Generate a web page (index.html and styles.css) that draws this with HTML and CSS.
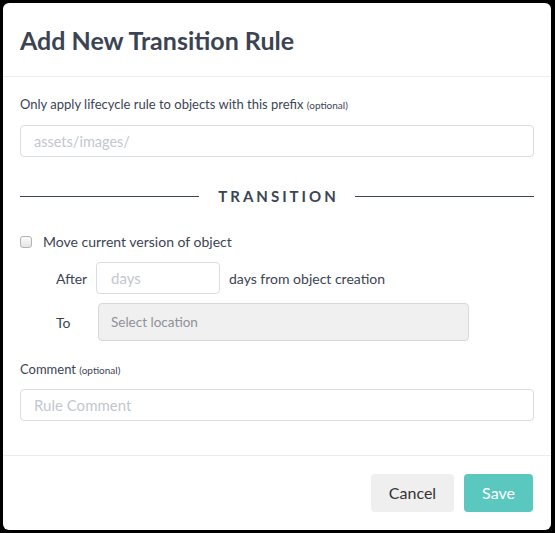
FILE: index.html
```html
<!DOCTYPE html>
<html>
<head>
<meta charset="utf-8">
<link rel="stylesheet" href="styles.css">
</head>
<body>
<div class="modal">
  <div class="modal-header">
    <h1 class="title">Add New Transition Rule</h1>
  </div>
  <div class="modal-body">
    <div class="label">Only apply lifecycle rule to objects with this prefix <small>(optional)</small></div>
    <div class="input input-full"><span class="ph">assets/images/</span></div>
    <div class="divider"><span class="line"></span><span class="divider-text">TRANSITION</span><span class="line"></span></div>
    <label class="check-row"><span class="checkbox"></span><span>Move current version of object</span></label>
    <div class="sub-row after-row">
      <span class="sub-label">After</span>
      <div class="input input-days"><span class="ph">days</span></div>
      <span class="suffix">days from object creation</span>
    </div>
    <div class="sub-row to-row">
      <span class="sub-label to-label">To</span>
      <div class="select"><span class="select-ph">Select location</span></div>
    </div>
    <div class="label comment-label">Comment <small>(optional)</small></div>
    <div class="input input-full comment-input"><span class="ph ph-comment">Rule Comment</span></div>
  </div>
  <div class="modal-footer">
    <button class="btn btn-cancel">Cancel</button>
    <button class="btn btn-save">Save</button>
  </div>
</div>
</body>
</html>
```
FILE: styles.css
```css
html, body {
  margin: 0;
  padding: 0;
  background: #000;
}
body {
  width: 555px;
  height: 533px;
  overflow: hidden;
  font-family: Lato, "Noto Sans", sans-serif;
  color: #3b4453;
}
.modal {
  margin: 3px 0 0 3px;
  width: 548px;
  height: 527px;
  background: #fff;
  border-radius: 6px;
  display: flex;
  flex-direction: column;
}
.modal-header {
  height: 73px;
  border-bottom: 1px solid #ececec;
  padding: 0 17px;
  display: flex;
  align-items: center;
}
.title {
  margin: 0;
  font-size: 25px;
  font-weight: 700;
  color: #3b4453;
  line-height: 30px;
}
.modal-body {
  flex: 1;
  padding: 0 17px;
  display: flex;
  flex-direction: column;
  align-items: flex-start;
}
.label {
  margin-top: 18px;
  font-size: 13px;
  line-height: 18px;
}
.label small {
  font-size: 10px;
}
.input {
  box-sizing: border-box;
  height: 32px;
  border: 1px solid #d9dce1;
  border-radius: 4px;
  display: flex;
  align-items: center;
  padding-left: 13px;
  font-size: 14.5px;
}
.ph {
  color: #c3c7ce;
}
.ph-comment {
  font-size: 15px;
}
.input-full {
  width: 514px;
  margin-top: 11px;
}
.divider {
  margin-top: 29px;
  width: 514px;
  height: 20px;
  display: flex;
  align-items: center;
  gap: 19px;
}
.line {
  flex: 1;
  height: 1px;
  background: #3b4453;
}
.divider-text {
  font-size: 15px;
  font-weight: 700;
  letter-spacing: 3px;
  margin-right: -3px;
  color: #3b4453;
}
.check-row {
  margin-top: 27px;
  display: flex;
  align-items: center;
  font-size: 14px;
  line-height: 18px;
}
.checkbox {
  box-sizing: border-box;
  width: 12px;
  height: 12px;
  border: 1px solid #b3b3b3;
  border-radius: 3px;
  background: linear-gradient(#fbfbfb, #e4e4e4);
  margin-right: 11px;
}
.sub-row {
  display: flex;
  align-items: center;
  font-size: 14px;
  padding-left: 36px;
}
.after-row {
  margin-top: 11px;
}
.sub-label {
  width: 40px;
}
.input-days {
  width: 124px;
  height: 32px;
  padding-left: 14px;
  font-size: 15px;
}
.suffix {
  margin-left: 9px;
}
.to-row {
  margin-top: 9px;
}
.to-label {
  width: 42px;
}
.select {
  box-sizing: border-box;
  width: 371px;
  height: 38px;
  background: #f0f0f0;
  border: 1px solid #d8d8d8;
  border-radius: 4px;
  display: flex;
  align-items: center;
  padding-left: 12px;
  font-size: 13.5px;
}
.select-ph {
  color: #8e9197;
}
.comment-label {
  margin-top: 19px;
}
.comment-input {
  margin-top: 10px;
}
.modal-footer {
  height: 73px;
  border-top: 1px solid #ececec;
  padding: 0 18px 1px 17px;
  display: flex;
  align-items: center;
  justify-content: flex-end;
  gap: 10px;
}
.btn {
  height: 38px;
  border: none;
  border-radius: 4px;
  font-family: Lato, "Noto Sans", sans-serif;
  font-size: 16px;
  padding: 0;
}
.btn-cancel {
  width: 83px;
  background: #efefef;
  color: #333;
}
.btn-save {
  width: 69px;
  background: #5bc8c0;
  color: #fff;
}
```
